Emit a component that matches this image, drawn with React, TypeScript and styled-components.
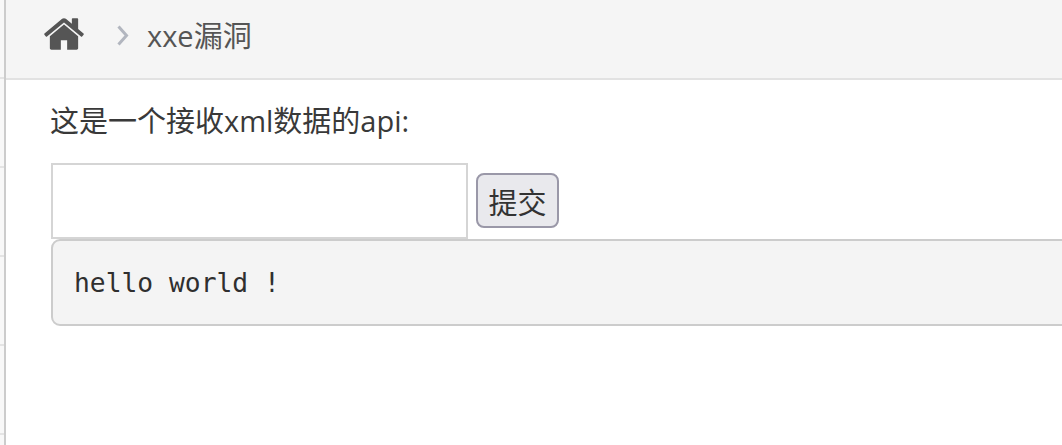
import styled, { createGlobalStyle } from 'styled-components'

const GlobalStyle = createGlobalStyle`
	html, body {
		margin: 0;
		padding: 0;
		height: 100%;
		overflow: hidden;
		background: #fff;
	}
	#root {
		height: 100%;
	}
`

const Page = styled.div`
	display: flex;
	height: 445px;
	font-family: 'Open Sans', 'Noto Sans CJK SC', sans-serif;
	font-size: 29px;
	color: #393939;
`

const Sidebar = styled.aside`
	flex: 0 0 4px;
	border-right: 2px solid #cccccc;
	background: repeating-linear-gradient(
		to bottom,
		#f8f8f8 0,
		#f8f8f8 87px,
		#e4e4e4 87px,
		#e4e4e4 89px
	);
	background-position: 0 79px;
`

const Main = styled.main`
	flex: 1;
	min-width: 0;
	overflow: hidden;
`

const Breadcrumbs = styled.nav`
	display: flex;
	align-items: center;
	box-sizing: border-box;
	height: 80px;
	padding: 0 0 11px 36px;
	background: #f5f5f5;
	border-bottom: 2px solid #e2e2e2;
	color: #555555;
`

const HomeIcon = styled.svg`
	width: 44px;
	height: 44px;
	margin-top: 1px;
	fill: #555555;
`

const Divider = styled.svg`
	width: 14px;
	height: 21px;
	margin: 4px 17px 0 30px;
	fill: none;
	stroke: #b2b6bf;
	stroke-width: 3;
`

const Content = styled.section`
	padding: 0 0 0 45px;
`

const Intro = styled.p`
	margin: 0 0 21px -1px;
	padding-top: 21px;
	line-height: 40px;
	height: 62px;
	box-sizing: border-box;
`

const QueryForm = styled.form`
	display: flex;
	align-items: flex-start;
	gap: 8px;
`

const QueryInput = styled.input`
	box-sizing: border-box;
	width: 417px;
	height: 76px;
	padding: 0 6px;
	border: 2px solid #d5d5d5;
	outline: none;
	background: #fff;
`

const SubmitButton = styled.button`
	box-sizing: border-box;
	height: 55px;
	width: 83px;
	margin-top: 10px;
	padding: 0;
	border: 2px solid #9a98a8;
	border-radius: 8px;
	background: #e9e9ed;
	color: #333333;
	font-family: inherit;
	font-size: 29px;
`

const Output = styled.pre`
	box-sizing: border-box;
	height: 87px;
	margin: 0 -30px 0 0;
	padding: 0 21px;
	border: 2px solid #cccccc;
	border-radius: 9px;
	background: #f4f4f4;
	color: #2f2f2f;
	font-family: 'DejaVu Sans Mono', monospace;
	font-size: 26.3px;
	line-height: 85px;
`

export default function App() {
	return (
		<Page>
			<GlobalStyle />
			<Sidebar />
			<Main>
				<Breadcrumbs>
					<HomeIcon viewBox='0 0 1792 1792'>
						<path d='M1472 992v480q0 26-19 45t-45 19h-384v-384h-256v384h-384q-26 0-45-19t-19-45v-480q0-1 .5-3t.5-3l575-474 575 474q1 2 1 6zm223-69l-62 74q-8 9-21 11h-3q-13 0-21-7l-692-577-692 577q-12 8-24 7-13-2-21-11l-62-74q-8-10-7-23.5t11-21.5l719-599q32-26 76-26t76 26l244 204v-195q0-14 9-23t23-9h192q14 0 23 9t9 23v408l219 182q10 8 11 21.5t-7 23.5z' />
					</HomeIcon>
					<Divider viewBox='0 0 14 21'>
						<path d='M2.5 1.5 L10.5 10.5 L2.5 19.5' />
					</Divider>
					<span>xxe漏洞</span>
				</Breadcrumbs>
				<Content>
					<Intro>这是一个接收xml数据的api:</Intro>
					<QueryForm onSubmit={(e) => e.preventDefault()}>
						<QueryInput type='text' />
						<SubmitButton type='submit'>提交</SubmitButton>
					</QueryForm>
					<Output>hello world !</Output>
				</Content>
			</Main>
		</Page>
	)
}
